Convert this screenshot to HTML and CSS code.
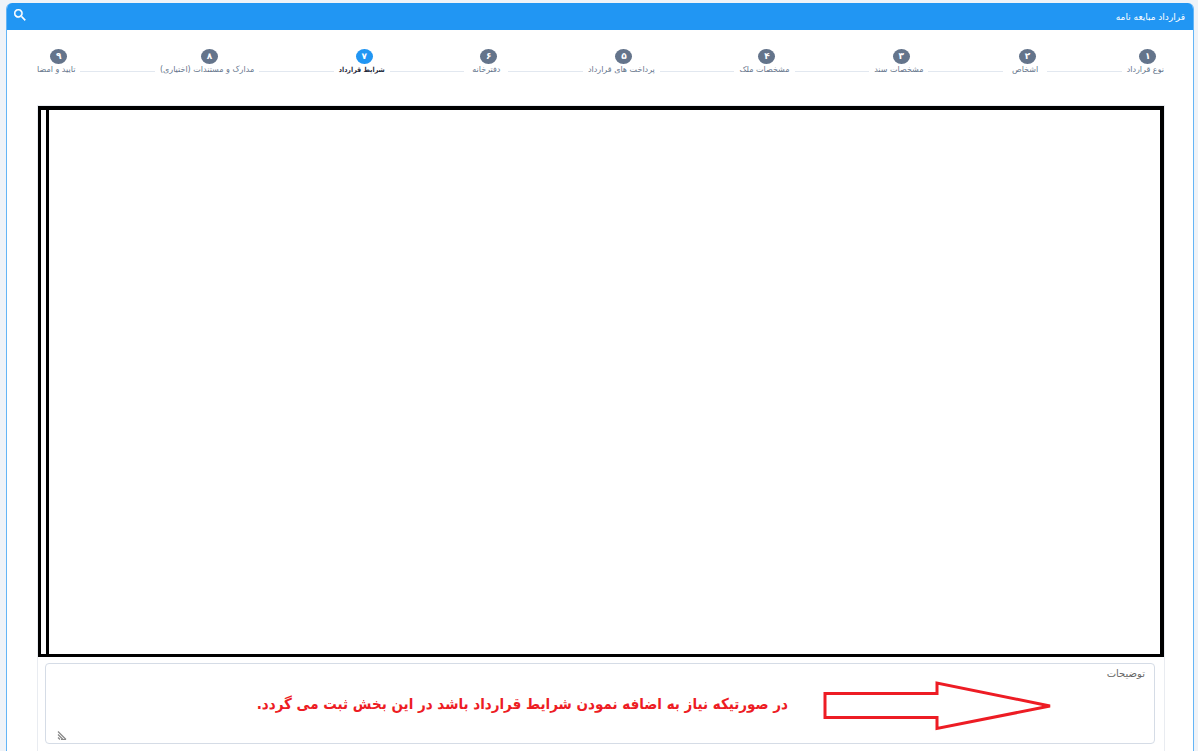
FILE: index.html
```html
<!DOCTYPE html>
<html lang="fa" dir="rtl">
<head>
<meta charset="utf-8">
<meta name="viewport" content="width=device-width, initial-scale=1">
<title>قرارداد مبایعه نامه</title>
<link rel="stylesheet" href="styles.css">
</head>
<body>
<main class="card">
  <header class="card-header">
    <h1 class="title">قرارداد مبایعه نامه</h1>
    <button class="search" type="button" aria-label="جستجو">
      <svg viewBox="3 3 18 18" width="12" height="12"><path fill="currentColor" stroke="currentColor" stroke-width=".6" d="M15.5 14h-.79l-.28-.27A6.47 6.47 0 0 0 16 9.5 6.5 6.5 0 1 0 9.5 16c1.61 0 3.09-.59 4.23-1.57l.27.28v.79l5 4.99L20.49 19l-4.99-5zm-6 0C7.01 14 5 11.99 5 9.5S7.01 5 9.5 5 14 7.01 14 9.5 11.99 14 9.5 14z"/></svg>
    </button>
  </header>
  <ol class="stepper">
    <li class="step"><span class="dot">۱</span><span class="label">نوع قرارداد</span></li>
    <li class="line" aria-hidden="true"></li>
    <li class="step"><span class="dot">۲</span><span class="label">اشخاص</span></li>
    <li class="line" aria-hidden="true"></li>
    <li class="step"><span class="dot">۳</span><span class="label">مشخصات سند</span></li>
    <li class="line" aria-hidden="true"></li>
    <li class="step"><span class="dot">۴</span><span class="label">مشخصات ملک</span></li>
    <li class="line" aria-hidden="true"></li>
    <li class="step"><span class="dot">۵</span><span class="label">پرداخت های قرارداد</span></li>
    <li class="line" aria-hidden="true"></li>
    <li class="step"><span class="dot">۶</span><span class="label">دفترخانه</span></li>
    <li class="line" aria-hidden="true"></li>
    <li class="step active" aria-current="step"><span class="dot">۷</span><span class="label">شرایط قرارداد</span></li>
    <li class="line" aria-hidden="true"></li>
    <li class="step"><span class="dot">۸</span><span class="label">مدارک و مستندات (اختیاری)</span></li>
    <li class="line" aria-hidden="true"></li>
    <li class="step"><span class="dot">۹</span><span class="label">تایید و امضا</span></li>
  </ol>
  <section class="panel">
    <div class="frame"><div class="frame-body"></div></div>
    <div class="field">
      <textarea class="notes" id="notes"></textarea>
      <label class="notes-label" for="notes">توضیحات</label>
      <svg class="grip" viewBox="0 0 10 9" width="10" height="9"><path d="M1 0.5l8 8M1 3.5l5 5M1 6.5l2 2M4 8.500h5" fill="none" stroke="#888" stroke-width="1.2"/></svg>
      <div class="callout">
        <svg class="arrow" viewBox="0 0 230 50" width="230" height="50"><path d="M3 12.5H115V2L228 25 115 47.500V36.500H3z" fill="none" stroke="#ed1c24" stroke-width="3"/></svg>
        <p class="callout-text">در صورتیکه نیاز به اضافه نمودن شرایط قرارداد باشد در این بخش ثبت می گردد.</p>
      </div>
    </div>
  </section>
</main>
</body>
</html>
```
FILE: styles.css
```css
* { box-sizing: border-box; }

body {
  margin: 0;
  padding: 3px 4px 0 6px;
  background: #eff3f8;
  font-family: "DejaVu Sans", sans-serif;
  font-size: 8px;
}

.card {
  display: flex;
  flex-direction: column;
  min-height: calc(100vh - 3px);
  border: 1px solid #64b5f6;
  border-width: 0 1px;
  border-radius: 6px 6px 0 0;
  background: #fff;
  overflow: hidden;
}

.card-header {
  display: flex;
  align-items: center;
  justify-content: space-between;
  height: 27px;
  padding: 0 8px 4px 7px;
  background: #2196f3;
  color: #fff;
}

.title { margin: 0; padding-top: 4px; font-size: 9px; font-weight: 400; }

.search {
  display: flex;
  padding: 0;
  border: 0;
  background: none;
  color: #fff;
}

.stepper {
  display: flex;
  align-items: flex-end;
  margin: 19px 29px 0 30px;
  padding: 0;
  list-style: none;
}

.step {
  display: flex;
  flex-direction: column;
  align-items: center;
  min-width: 44px;
  padding: 0 5px;
  color: #64748b;
}

.step:first-child { min-width: 0; padding-right: 0; }
.step:last-child { min-width: 0; padding-left: 0; }

.dot {
  width: 17px;
  height: 15px;
  margin-left: 5px;
  border-radius: 50%;
  background: #64748b;
  color: #fff;
  font-size: 9px;
  font-weight: 700;
  line-height: 15px;
  text-align: center;
}

.label { line-height: 12px; white-space: nowrap; }

.active { color: #1e293b; }
.active .label { font-family: "DejaVu Sans Condensed", "DejaVu Sans", sans-serif; font-size: 7px; font-weight: 700; }
.active .dot { background: #2196f3; }

.line {
  flex: 1;
  height: 1px;
  margin-bottom: 4px;
  background: #e2e8f0;
}

.panel {
  display: flex;
  flex: 1;
  flex-direction: column;
  margin: 29px 28px 0 30px;
  border: 1px solid #e9ecf1;
  border-bottom: 0;
}

.frame {
  display: flex;
  flex: 1;
  border: solid #000;
  border-width: 4px 4px 3px 3px;
}

.frame-body { flex: 1; margin-left: 5px; border-left: 3px solid #000; }

.field { position: relative; padding: 6px 9px 7px 7px; }

.notes {
  display: block;
  width: 100%;
  height: 81px;
  padding: 20px 10px;
  border: 1px solid #d5dce6;
  border-radius: 4px;
  background: #fff;
  font: inherit;
  resize: none;
}

.notes-label {
  position: absolute;
  top: 11px;
  right: 19px;
  color: #666;
  font-size: 10px;
  line-height: 12px;
}

.grip { position: absolute; bottom: 11px; left: 19px; }

.callout {
  position: absolute;
  top: 24px;
  right: 112px;
  display: flex;
  align-items: center;
  gap: 34px;
  color: #ed1c24;
  pointer-events: none;
}

.callout-text {
  margin: 0;
  padding-bottom: 4px;
  font-family: "DejaVu Sans Condensed", "DejaVu Sans", sans-serif;
  font-size: 15px;
  font-weight: 700;
  line-height: 20px;
  white-space: nowrap;
}
```
